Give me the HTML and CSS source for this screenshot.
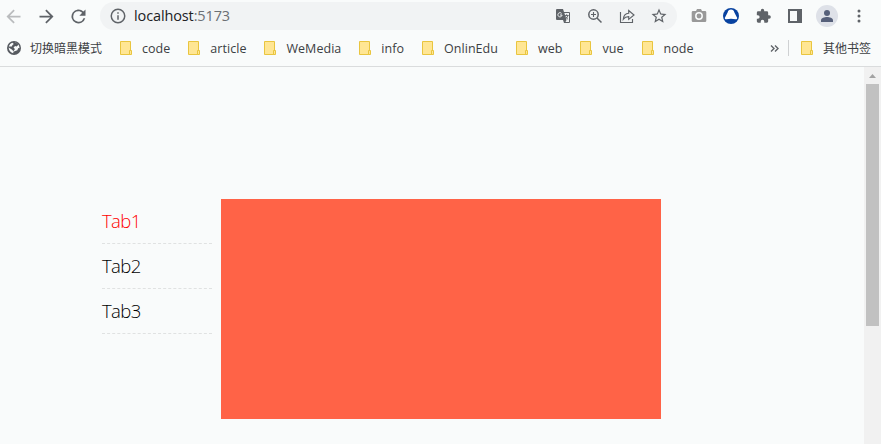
FILE: index.html
```
<!DOCTYPE html>
<html lang="zh">
<head>
<meta charset="utf-8">
<title>localhost:5173</title>
<link rel="stylesheet" href="styles.css">
</head>
<body>
<svg width="0" height="0" class="defs"><defs>
<symbol id="folder" viewBox="0 0 13 15"><path d="M.5.5h10v13H.5z" fill="#ffe694" stroke="#e9c53f"/><path d="M9.5 9.5h2v4h-2z" fill="#ffe694" stroke="#e9c53f"/></symbol>
</defs></svg>
<header class="toolbar">
  <svg class="icon nav back" viewBox="0 0 24 24"><path d="M20 11H7.83l5.59-5.59L12 4l-8 8 8 8 1.41-1.41L7.83 13H20z"/></svg>
  <svg class="icon nav" viewBox="0 0 24 24"><path d="M12 4l-1.41 1.41L16.17 11H4v2h12.17l-5.58 5.59L12 20l8-8z"/></svg>
  <svg class="icon nav reload" viewBox="0 0 24 24"><path d="M17.65 6.35A8 8 0 1 0 19.73 14h-2.08A6 6 0 1 1 12 6c1.66 0 3.14.69 4.22 1.78L13 11h7V4z"/></svg>
  <div class="address">
    <svg class="icon info" viewBox="0 0 24 24"><path d="M11 7h2v2h-2zm0 4h2v6h-2zm1-9a10 10 0 1 0 0 20 10 10 0 0 0 0-20zm0 18a8 8 0 1 1 0-16 8 8 0 0 1 0 16z"/></svg>
    <span class="url">localhost<span class="port">:5173</span></span>
    <div class="actions">
      <svg class="icon" viewBox="0 0 16 16"><path d="M2 1h6l1 3h5a1 1 0 0 1 1 1v9a1 1 0 0 1-1 1H9l-1-3H2a1 1 0 0 1-1-1V2a1 1 0 0 1 1-1z"/><path d="M9.4 5H14v9h-3.5l1-2z" fill="#f1f3f4"/><path d="M9.7 7.5h4M11.7 6.2v1.3M12.8 7.8c-.5 1.8-1.4 2.7-2.6 3.3M10.5 8.4c.7 1.3 1.4 2 2.6 3" fill="none" stroke="#5f6368" stroke-width=".9"/><path d="M6.6 5.4A2.1 2.1 0 1 0 7.1 7H5" fill="none" stroke="#f1f3f4"/></svg>
      <svg class="icon" viewBox="0 0 16 16"><g fill="none" stroke="#5f6368" stroke-width="1.5"><circle cx="6.500" cy="6.500" r="4.700"/><path d="M10 10l4.500 4.500"/><path d="M4 6.500h5M6.500 4v5" stroke-width="1.100"/></g></svg>
      <svg class="icon" viewBox="0 0 16 16"><path d="M1.500 4v10.500h12V11M4.300 11.200c.3-3.600 2-5.600 5.400-5.900V2.500L15 7l-5.300 4.400V8.600c-2.300 0-4 .7-5.400 2.600z" fill="none" stroke="#5f6368" stroke-width="1.150"/></svg>
      <svg class="icon star" viewBox="0 0 24 24"><path d="M22 9.240l-7.190-.62L12 2 9.190 8.630 2 9.240l5.460 4.730L5.820 21 12 17.270 18.180 21l-1.630-7.030zM12 15.400l-3.760 2.270 1-4.280-3.320-2.880 4.380-.38L12 6.100l1.710 4.040 4.380.38-3.320 2.880 1 4.280z"/></svg>
    </div>
  </div>
  <div class="extensions">
    <svg class="icon" viewBox="0 0 16 16"><path d="M2 3h3l1-2h4l1 2h3a1.300 1.300 0 0 1 1.300 1.300v8.400A1.300 1.300 0 0 1 14 14H2A1.300 1.300 0 0 1 .7 12.700V4.300A1.300 1.300 0 0 1 2 3z" fill="#999"/><circle cx="8" cy="8" r="3.200" fill="#999" stroke="#f9fbfb" stroke-width="1.500"/></svg>
    <svg class="icon" viewBox="0 0 16 16"><circle cx="8" cy="8" r="8" fill="#0842a0"/><path d="M8 1.600c2 0 2.700 1 3.400 2.800l2.700 5.400c.4 1-.5 1.700-1.500 1.500-3-.7-6.200-.7-9.200 0-1 .2-1.900-.5-1.500-1.500l2.700-5.400C5.300 2.600 6 1.600 8 1.600z" fill="#fff"/></svg>
    <svg class="icon puzzle" viewBox="0 0 24 24"><path d="M20.500 11H19V7a2 2 0 0 0-2-2h-4V3.500a2.500 2.500 0 0 0-5 0V5H4a2 2 0 0 0-2 2v3.800h1.500a2.700 2.700 0 0 1 0 5.400H2V20a2 2 0 0 0 2 2h3.800v-1.500a2.700 2.700 0 0 1 5.400 0V22H17a2 2 0 0 0 2-2v-4h1.500a2.500 2.500 0 0 0 0-5z"/></svg>
    <svg class="icon" viewBox="0 0 16 16"><path d="M1 1h14v14H1zM3 3v10h7V3z" fill-rule="evenodd"/></svg>
    <svg class="avatar" viewBox="0 0 22 22"><circle cx="11" cy="11" r="11" fill="#dee1e8"/><circle cx="11" cy="8" r="3" fill="#56607a"/><path d="M5 17v-1.700C5 13 8.500 12 11 12s6 1 6 3.300V17z" fill="#56607a"/></svg>
    <svg class="icon" viewBox="0 0 16 16"><circle cx="8" cy="3" r="1.500"/><circle cx="8" cy="8" r="1.500"/><circle cx="8" cy="13" r="1.500"/></svg>
  </div>
</header>
<nav class="bookmarks">
  <a class="bookmark site"><svg class="globe" viewBox="0 0 14 14"><circle cx="7" cy="7" r="7" fill="#565a60"/><path d="M7.500 1.500c1.600.1 3 .9 3.900 2.200L9.700 5.500 8 5 6.500 6.800 8 8l-1.500 2.200L4.800 8.500 1.600 6.400c.2 2.800 2 5 4.700 5.800V10.800l4-1.600 1-2.300 1.200.4C12.500 3.800 10.400 1.500 7.500 1.500zM1.800 5.400l3 .2L5.500 4l1.300-1L5.500 1.700C3.800 2.200 2.400 3.600 1.800 5.400z" fill="#f9fbfb"/></svg><span class="cjk">切换暗黑模式</span></a>
  <a class="bookmark"><svg class="folder"><use href="#folder"/></svg><span class="latin">code</span></a>
  <a class="bookmark"><svg class="folder"><use href="#folder"/></svg><span class="latin">article</span></a>
  <a class="bookmark"><svg class="folder"><use href="#folder"/></svg><span class="latin">WeMedia</span></a>
  <a class="bookmark"><svg class="folder"><use href="#folder"/></svg><span class="latin">info</span></a>
  <a class="bookmark"><svg class="folder"><use href="#folder"/></svg><span class="latin">OnlinEdu</span></a>
  <a class="bookmark"><svg class="folder"><use href="#folder"/></svg><span class="latin">web</span></a>
  <a class="bookmark"><svg class="folder"><use href="#folder"/></svg><span class="latin">vue</span></a>
  <a class="bookmark"><svg class="folder"><use href="#folder"/></svg><span class="latin">node</span></a>
  <div class="overflow">
    <svg class="chevrons" viewBox="0 0 9 7"><path d="M1 .5l3 3-3 3M5 .5l3 3-3 3" fill="none" stroke="#5f6368" stroke-width="1.400"/></svg>
    <i class="divider"></i>
    <a class="bookmark"><svg class="folder"><use href="#folder"/></svg><span class="cjk">其他书签</span></a>
  </div>
</nav>
<div class="viewport">
  <main class="page">
    <ul class="tabs">
      <li class="tab active">Tab1</li>
      <li class="tab">Tab2</li>
      <li class="tab">Tab3</li>
    </ul>
    <section class="panel"></section>
  </main>
  <div class="scrollbar">
    <svg class="arrow" viewBox="0 0 17 17"><path d="M5 11l3.500-4 3.500 4z" fill="#a3a3a3"/></svg>
    <div class="thumb"></div>
  </div>
</div>
</body>
</html>
```
FILE: styles.css
```
* { box-sizing: border-box; }
body {
  margin: 0;
  height: 444px;
  overflow: hidden;
  display: flex;
  flex-direction: column;
  background: #f9fbfb;
  font-family: "Open Sans", "Noto Sans CJK SC", sans-serif;
}
svg { display: block; flex: none; }
.defs { position: absolute; }
.icon { width: 16px; height: 16px; fill: #5f6368; }
.toolbar { height: 32px; flex: none; display: flex; align-items: center; padding-left: 3px; }
.nav { width: 21px; height: 21px; margin-right: 11px; }
.back { fill: #babcbe; margin-right: 12px; }
.reload { margin-right: 10px; }
.address {
  width: 577px;
  height: 28px;
  margin-left: 1px;
  border-radius: 14px;
  background: #f1f3f4;
  display: flex;
  align-items: center;
  padding: 0 10px 0 9px;
}
.info { width: 18px; height: 18px; }
.url { margin-left: 7px; font-size: 14.5px; line-height: 20px; letter-spacing: -0.12px; color: #202124; }
.port { color: #6b6f73; }
.actions { margin-left: auto; display: flex; align-items: center; gap: 16px; }
.star { width: 18px; height: 18px; margin: 0 -1px; }
.extensions { margin-left: 14px; display: flex; align-items: center; gap: 16px; }
.puzzle { width: 17px; margin-right: -1px; }
.avatar { width: 22px; height: 22px; margin: 0 -3px; }
.bookmarks {
  height: 35px;
  flex: none;
  display: flex;
  align-items: center;
  padding: 0 10px 2px 7px;
  border-bottom: 1px solid #dadcdd;
  color: #3c4043;
  font-size: 12.5px;
  line-height: 18px;
  white-space: nowrap;
}
.bookmark { display: flex; align-items: center; margin-right: 18px; }
.latin { padding-top: 2px; letter-spacing: 0.04px; }
.folder { width: 13px; height: 15px; margin-right: 9px; }
.globe { width: 14px; height: 14px; margin-right: 9px; }
.cjk { font-family: "Noto Sans CJK SC", sans-serif; font-size: 12px; }
.overflow { margin-left: auto; display: flex; align-items: center; }
.overflow .bookmark { margin-right: 0; }
.chevrons { width: 9px; height: 7px; }
.divider { width: 1px; height: 16px; margin: 0 12px 0 9px; background: #cfd1d3; }
.viewport { flex: 1; min-height: 0; display: flex; }
.page { flex: 1; display: flex; padding: 132px 0 0 102px; }
.tabs { width: 110px; margin: 0 9px 0 0; padding: 0; list-style: none; }
.tab {
  height: 45px;
  border-bottom: 1px dashed #e0e2e2;
  font-family: "Open Sans", sans-serif;
  font-size: 18.5px;
  font-weight: 300;
  letter-spacing: -0.6px;
  line-height: 44px;
  color: #000;
}
.active { color: #f00; }
.panel { width: 440px; height: 220px; background: #ff6347; }
.scrollbar { width: 17px; background: #f1f1f1; }
.arrow { width: 17px; height: 17px; }
.thumb { width: 13px; height: 242px; margin-left: 2px; background: #c1c1c1; }
```
